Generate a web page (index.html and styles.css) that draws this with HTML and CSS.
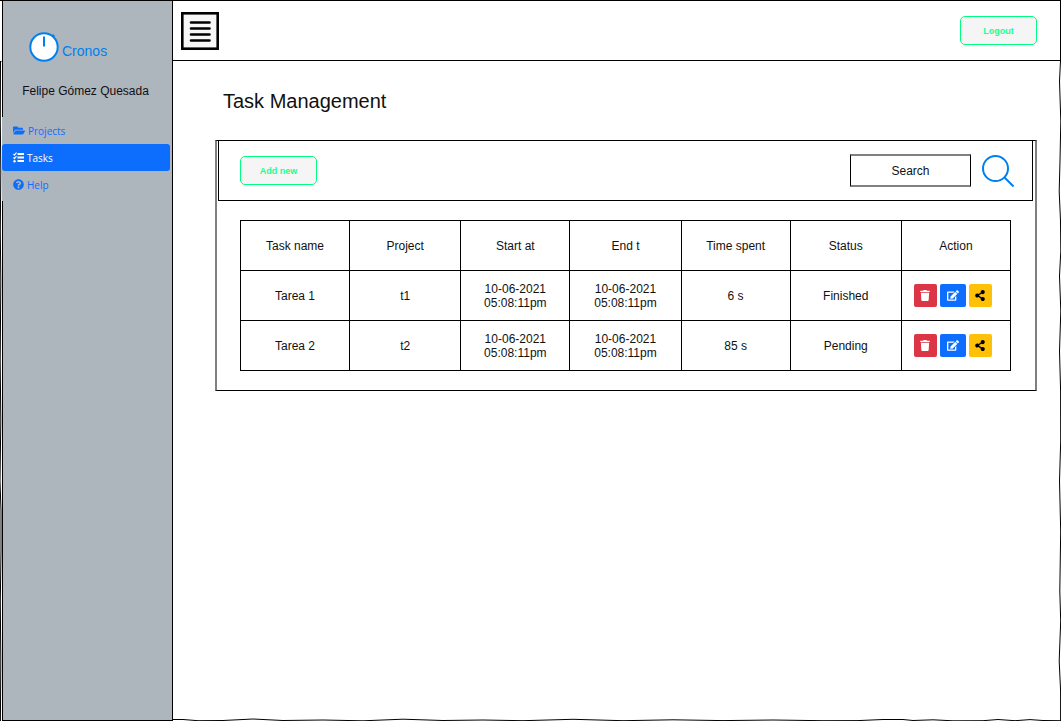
FILE: index.html
```html
<!DOCTYPE html>
<html lang="en">
<head>
<meta charset="utf-8">
<title>Cronos - Task Management</title>
<link rel="stylesheet" href="styles.css">
</head>
<body>
<svg class="symbols" aria-hidden="true">
  <symbol id="trash" viewBox="0 0 448 512"><path d="M432 32H312l-9.4-18.7A24 24 0 0 0 281.1 0H166.8a23.72 23.72 0 0 0-21.4 13.3L136 32H16A16 16 0 0 0 0 48v32a16 16 0 0 0 16 16h416a16 16 0 0 0 16-16V48a16 16 0 0 0-16-16zM53.2 467a48 48 0 0 0 47.9 45h245.8a48 48 0 0 0 47.9-45L416 128H32z"/></symbol>
  <symbol id="edit" viewBox="0 0 576 512"><path d="M402.6 83.2l90.2 90.2c3.8 3.8 3.8 10 0 13.8L274.4 405.6l-92.8 10.3c-12.4 1.4-22.9-9.1-21.5-21.5l10.3-92.8L388.8 83.2c3.8-3.8 10-3.8 13.8 0zm162-22.9l-48.8-48.8c-15.2-15.2-39.9-15.2-55.2 0l-35.4 35.4c-3.8 3.8-3.8 10 0 13.8l90.2 90.2c3.8 3.8 10 3.8 13.8 0l35.4-35.4c15.2-15.3 15.2-40 0-55.2zM384 346.2V448H64V128h229.8c3.2 0 6.2-1.3 8.5-3.5l40-40c7.6-7.6 2.2-20.5-8.5-20.5H48C21.5 64 0 85.5 0 112v352c0 26.5 21.5 48 48 48h352c26.5 0 48-21.5 48-48V306.2c0-10.7-12.9-16-20.5-8.5l-40 40c-2.2 2.3-3.5 5.3-3.5 8.5z"/></symbol>
  <symbol id="share" viewBox="0 0 448 512"><path d="M352 320c-22.608 0-43.387 7.819-59.79 20.895l-102.486-64.054a96.551 96.551 0 0 0 0-41.683l102.486-64.054C308.613 184.181 329.392 192 352 192c53.019 0 96-42.981 96-96S405.019 0 352 0s-96 42.981-96 96c0 7.158.79 14.13 2.276 20.841L155.79 180.895C139.387 167.819 118.608 160 96 160c-53.019 0-96 42.981-96 96s42.981 96 96 96c22.608 0 43.387-7.819 59.79-20.895l102.486 64.054A96.301 96.301 0 0 0 256 416c0 53.019 42.981 96 96 96s96-42.981 96-96-42.981-96-96-96z"/></symbol>
</svg>

<div class="app">
  <aside class="sidebar">
    <div class="brand">
      <svg class="brand-icon" viewBox="0 0 30 30" aria-hidden="true">
        <path d="M23 3l2 2" stroke="#0080f0" stroke-width="3"/>
        <circle cx="15" cy="15" r="13.7" fill="#fff" stroke="#0080f0" stroke-width="2"/>
        <path d="M15 4.500v10" stroke="#0080f0" stroke-width="2"/>
      </svg>
      <span>Cronos</span>
    </div>
    <p class="user">Felipe Gómez Quesada</p>
    <nav class="nav">
      <a class="nav-link" href="#projects">
        <svg class="nav-icon wide" viewBox="0 0 576 512" aria-hidden="true"><path d="M572.694 292.093L500.27 416.248A63.997 63.997 0 0 1 444.989 448H45.025c-18.523 0-30.064-20.093-20.731-36.093l72.424-124.155A64 64 0 0 1 152 256h399.964c18.523 0 30.064 20.093 20.73 36.093zM152 224h328v-48c0-26.51-21.49-48-48-48H272l-64-64H48C21.490 64 0 85.490 0 112v278.046l69.077-118.418C86.214 242.250 117.989 224 152 224z"/></svg>
        Projects
      </a>
      <a class="nav-link active" href="#tasks" aria-current="page">
        <svg class="nav-icon" viewBox="0 0 22 22" aria-hidden="true">
          <path d="M1 4l2 2 4-5M1 11l2 2 4-5" fill="none" stroke="currentColor" stroke-width="2.400"/>
          <circle cx="3" cy="18.500" r="2.400"/>
          <path d="M9 2h13v4H9zM9 9h13v4H9zM9 16h13v4H9z"/>
        </svg>
        Tasks
      </a>
      <a class="nav-link" href="#help">
        <svg class="nav-icon" viewBox="0 0 512 512" aria-hidden="true"><path d="M504 256c0 136.997-111.043 248-248 248S8 392.997 8 256C8 119.083 119.043 8 256 8s248 111.083 248 248zM262.655 90c-54.497 0-89.255 22.957-116.549 63.758-3.536 5.286-2.353 12.415 2.715 16.258l34.699 26.310c5.205 3.947 12.621 3.008 16.665-2.122 17.864-22.658 30.113-35.797 57.303-35.797 20.429 0 45.698 13.148 45.698 32.958 0 14.976-12.363 22.667-32.534 33.976C247.128 238.528 216 254.941 216 296v4c0 6.627 5.373 12 12 12h56c6.627 0 12-5.373 12-12v-1.333c0-28.462 83.186-29.647 83.186-106.667 0-58.002-60.165-102-116.531-102zM256 338c-25.365 0-46 20.635-46 46 0 25.364 20.635 46 46 46s46-20.636 46-46c0-25.365-20.635-46-46-46z"/></svg>
        Help
      </a>
    </nav>
  </aside>

  <div class="content">
    <header class="topbar">
      <button class="menu-button" type="button" aria-label="Menu">
        <svg class="menu-icon" viewBox="0 0 38 38" aria-hidden="true">
          <rect x="1.300" y="1.300" width="35.400" height="35.400" fill="#f7f7f7" stroke="#000" stroke-width="2.600"/>
          <path d="M10 10.500h18.500M10 16.500h18.500M10 22.500h18.500M10 28.500h18.500" stroke="#000" stroke-width="2.600" stroke-linecap="round"/>
        </svg>
      </button>
      <button class="outline-button" type="button">Logout</button>
    </header>

    <main class="main">
      <h1 class="title">Task Management</h1>
      <section class="panel">
        <div class="toolbar">
          <button class="outline-button" type="button">Add new</button>
          <form class="search">
            <input class="search-input" type="text" placeholder="Search" aria-label="Search">
            <button class="search-button" type="button" aria-label="Run search">
              <svg class="search-icon" viewBox="0 0 32 32" aria-hidden="true">
                <circle cx="13.500" cy="13.500" r="12.500"/>
                <path d="M22 22l9.500 9.500"/>
              </svg>
            </button>
          </form>
        </div>
        <div class="table-wrap">
          <table class="tasks">
            <colgroup><col class="narrow"><col class="wide-col"><col class="narrow"><col class="wide-col"><col class="narrow"><col class="wide-col"><col class="narrow"></colgroup>
            <thead>
              <tr><th>Task name</th><th>Project</th><th>Start at</th><th>End t</th><th>Time spent</th><th>Status</th><th>Action</th></tr>
            </thead>
            <tbody>
              <tr>
                <td>Tarea 1</td><td>t1</td><td>10-06-2021<br>05:08:11pm</td><td>10-06-2021<br>05:08:11pm</td><td>6 s</td><td>Finished</td>
                <td><div class="actions">
                  <button class="action delete" type="button" aria-label="Delete Tarea 1"><svg><use href="#trash"/></svg></button>
                  <button class="action edit" type="button" aria-label="Edit Tarea 1"><svg><use href="#edit"/></svg></button>
                  <button class="action share" type="button" aria-label="Share Tarea 1"><svg><use href="#share"/></svg></button>
                </div></td>
              </tr>
              <tr>
                <td>Tarea 2</td><td>t2</td><td>10-06-2021<br>05:08:11pm</td><td>10-06-2021<br>05:08:11pm</td><td>85 s</td><td>Pending</td>
                <td><div class="actions">
                  <button class="action delete" type="button" aria-label="Delete Tarea 2"><svg><use href="#trash"/></svg></button>
                  <button class="action edit" type="button" aria-label="Edit Tarea 2"><svg><use href="#edit"/></svg></button>
                  <button class="action share" type="button" aria-label="Share Tarea 2"><svg><use href="#share"/></svg></button>
                </div></td>
              </tr>
            </tbody>
          </table>
        </div>
      </section>
    </main>
  </div>
  <svg class="edge edge-left" viewBox="0 0 2 660" preserveAspectRatio="none" aria-hidden="true"><path d="M0 0h2M.5 0L.3 60L.8 110L.3 170L.8 220L.2 300L.8 360L0 420L1 450L1 490L.3 540L.8 600L.4 660"/></svg>
  <svg class="edge edge-right" viewBox="0 0 3 660" preserveAspectRatio="none" aria-hidden="true"><path d="M2.500 0L1.500 20L2.800 60L2 100L1.200 130L2.500 160L2.800 190L1.500 215L2.800 250L1.500 290L2.600 330L2.700 380L1.500 420L2.700 470L1.800 530L2.700 560L1.200 600L2.600 630L2.600 660"/></svg>
  <svg class="edge edge-bottom" viewBox="0 0 888 3" preserveAspectRatio="none" aria-hidden="true"><path d="M0 1.500L10 1.500L25 2.700L50 2.500L80 1L110 2.500L150 2L190 2.800L230 1.200L270 2.500L310 2L350 2.700L400 1.300L450 2.700L500 1.800L550 2.600L600 2L650 2.700L685 2.600L710 1.500L730 1.500L740 2.500L760 1.800L780 2.800L810 2.700L825 1.500L842 2.700L857 1.600L870 2.500L888 2.700"/></svg>
</div>
</body>
</html>
```

FILE: styles.css
```css
* {
  box-sizing: border-box;
}

body {
  margin: 0;
  background: #fff;
  color: #111;
  font-family: "Liberation Sans", Arial, sans-serif;
  font-size: 12px;
  line-height: 14px;
}

button {
  padding: 0;
  border: 0;
  background: none;
  font-family: inherit;
  cursor: pointer;
}

svg {
  display: block;
  fill: currentColor;
}

.symbols {
  position: absolute;
  width: 0;
  height: 0;
}

.app {
  position: relative;
  display: grid;
  grid-template-columns: 171px 1fr;
  min-height: 100vh;
  padding-left: 2px;
  border-top: 1px solid #000;
}

.sidebar {
  border: solid #000;
  border-width: 0 1px 1px;
  background: #adb5bd;
}

.brand {
  display: flex;
  align-items: center;
  gap: 3px;
  padding: 31px 26px 0;
  color: #0080f0;
  font-size: 14px;
  line-height: 16px;
}

.brand span {
  padding-top: 8px;
}

.brand-icon {
  width: 30px;
  height: 30px;
}

.user {
  margin: 22px 0 19px;
  padding-right: 4px;
  text-align: center;
}

.nav {
  margin: 0 2px 0 -1px;
  padding-bottom: 3px;
  background: #adb5bd;
}

.nav-link {
  display: flex;
  align-items: center;
  gap: 3px;
  height: 27px;
  padding-left: 11px;
  border-radius: 3px;
  color: #0d6efd;
  font-family: "Open Sans", "Noto Sans", sans-serif;
  font-size: 10px;
  text-decoration: none;
}

.nav-link.active {
  background: #0d6efd;
  color: #fff;
}

.nav-icon {
  width: 11px;
  height: 11px;
}

.nav-icon.wide {
  width: 12px;
}

.topbar {
  display: flex;
  align-items: center;
  justify-content: space-between;
  height: 60px;
  padding: 0 23px 0 8px;
  border: solid #000;
  border-width: 0 1px 1px 0;
}

.menu-icon {
  width: 38px;
  height: 38px;
}

.outline-button {
  width: 77px;
  height: 29px;
  border: 1px solid #00ff80;
  border-radius: 5px;
  background: #f5f5f5;
  color: #1aff8c;
  font-size: 9px;
  font-weight: bold;
}

.main {
  padding: 28px 24px 28px 42px;
}

.title {
  margin: 0 0 27px;
  padding-left: 8px;
  font-size: 20px;
  font-weight: normal;
  line-height: 24px;
}

.panel {
  padding: 0 2px 19px 1px;
  border: solid #000;
  border-width: 1px 2px;
  border-right-color: #808080;
  border-left-color: #808080;
}

.toolbar {
  display: flex;
  align-items: center;
  justify-content: space-between;
  height: 60px;
  padding: 0 18px 0 21px;
  border: solid #000;
  border-width: 0 1px 1px;
}

.search {
  display: flex;
  align-items: center;
  gap: 11px;
}

.search-input {
  width: 121px;
  height: 33px;
  padding: 0;
  border: solid #000;
  border-width: 2px 1px;
  border-top-color: #808080;
  border-bottom-color: #808080;
  background: #fff;
  font: inherit;
  text-align: center;
}

.search-input::placeholder {
  color: #111;
  opacity: 1;
}

.search-icon {
  width: 32px;
  height: 32px;
  fill: none;
  stroke: #0080f0;
  stroke-width: 2;
}

.table-wrap {
  padding: 19px 22px 0;
}

.tasks {
  width: 100%;
  border-collapse: collapse;
  table-layout: fixed;
}

.narrow {
  width: 14.15%;
}

.wide-col {
  width: 14.45%;
}

.tasks th,
.tasks td {
  height: 50px;
  padding: 0;
  border: 1px solid #000;
  font-weight: normal;
  text-align: center;
}

.actions {
  display: flex;
  justify-content: center;
  gap: 3px;
  padding-right: 6px;
}

.action {
  display: flex;
  align-items: center;
  justify-content: center;
  width: 23px;
  height: 23px;
  border-radius: 2px;
  color: #fff;
}

.action svg {
  width: 12px;
  height: 11px;
}

.action.delete {
  background: #dc3545;
}

.action.edit {
  width: 26px;
  background: #0d6efd;
}

.action.share {
  background: #ffc107;
  color: #000;
}

.edge {
  position: absolute;
  fill: none;
  stroke: #000;
  stroke-width: 1;
}

.edge-left {
  top: 60px;
  left: 0;
  width: 2px;
  height: calc(100% - 60px);
}

.edge-right {
  top: 60px;
  right: 0;
  width: 3px;
  height: calc(100% - 60px);
}

.edge-bottom {
  right: 0;
  bottom: 0;
  width: calc(100% - 173px);
  height: 3px;
}
```
